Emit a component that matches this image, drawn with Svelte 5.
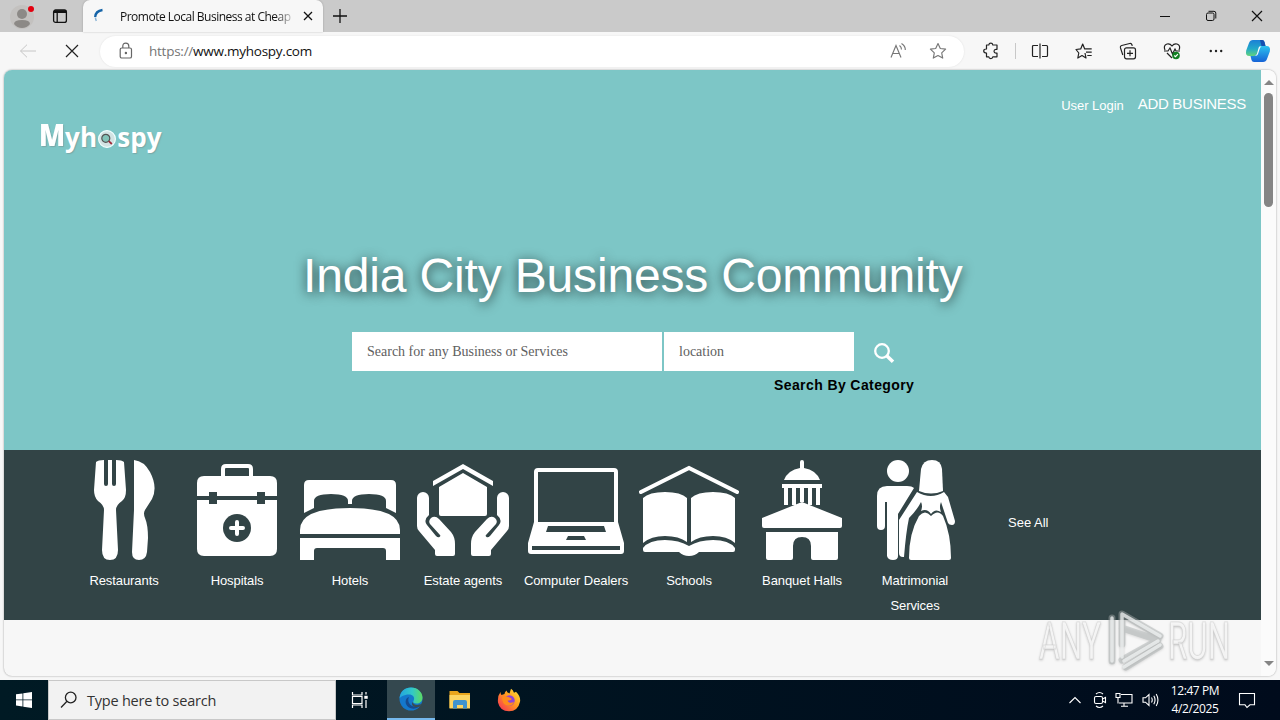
<script lang="ts">
  type Category = { icon: string; label: string }

  const categories: Category[] = [
    { icon: 'restaurant', label: 'Restaurants' },
    { icon: 'hospital', label: 'Hospitals' },
    { icon: 'hotel', label: 'Hotels' },
    { icon: 'estate', label: 'Estate agents' },
    { icon: 'computer', label: 'Computer Dealers' },
    { icon: 'school', label: 'Schools' },
    { icon: 'hall', label: 'Banquet Halls' },
    { icon: 'wedding', label: 'Matrimonial Services' },
  ]

  let query = $state('')
  let place = $state('')
</script>

<div class="screen">
  <div class="tabstrip">
    <svg class="avatar" width="26" height="28" viewBox="0 0 26 28">
      <circle cx="13" cy="15" r="12" fill="#c3c1bf" />
      <circle cx="13" cy="12" r="5" fill="#8c8986" />
      <path d="M5 22q0-4 8-4t8 4q-3 4-8 4t-8-4z" fill="#8c8986" />
      <circle cx="22" cy="7" r="3" fill="#e3000f" />
    </svg>
    <svg class="workspaces" width="16" height="16" viewBox="0 0 16 16" fill="none" stroke="#111" stroke-width="1.3">
      <rect x="1.6" y="2" width="12.8" height="12.4" rx="2" />
      <path d="M2 3.6h12" stroke-width="2.8" />
      <path d="M5.2 4v10" />
    </svg>
    <div class="tab">
      <svg class="spinner" width="14" height="16" viewBox="0 0 14 16" fill="none" stroke="#1564a8" stroke-width="2.3">
        <path d="M10.5 2Q3.500 3 3.200 9" />
        <path d="M3.400 9.500q.2 2 1 3.400" stroke="#8bb4d6" stroke-width="1.500" />
      </svg>
      <span class="tab-title">Promote Local Business at Cheap</span>
      <svg class="tab-close" width="10" height="10" viewBox="0 0 10 10" stroke="#111" stroke-width="1.3"><path d="M1 1l8 8M9 1L1 9" /></svg>
    </div>
    <svg class="new-tab" width="14" height="14" viewBox="0 0 14 14" stroke="#111" stroke-width="1.3"><path d="M7 0v14M0 7h14" /></svg>
    <div class="window-buttons">
      <svg width="12" height="12" viewBox="0 0 12 12" stroke="#111" fill="none"><path d="M1 6.500h10" /></svg>
      <svg width="12" height="12" viewBox="0 0 12 12" stroke="#111" fill="none"><rect x="1.500" y="3" width="7.500" height="7.500" rx="1.500" /><path d="M3.500 1.300H9q1.800 0 1.800 1.800v5.400" /></svg>
      <svg width="12" height="12" viewBox="0 0 12 12" stroke="#111" fill="none"><path d="M1 1l10 10M11 1L1 11" stroke-width="1.200" /></svg>
    </div>
  </div>

  <div class="toolbar">
    <svg class="back" width="18" height="14" viewBox="0 0 18 14" stroke="#c6c6c6" fill="none"><path d="M17 7H1.500M8 .7L1.500 7 8 13.300" /></svg>
    <svg class="stop" width="14" height="14" viewBox="0 0 14 14" stroke="#222" stroke-width="1.200"><path d="M1 1l12 12M13 1L1 13" /></svg>
    <div class="address">
      <svg width="14" height="18" viewBox="0 0 14 18" stroke="#666" stroke-width="1.200" fill="none">
        <rect x="1.200" y="6" width="11.300" height="10" rx="1.600" /><path d="M3.800 6V4.200q0-3 3-3t3 3V6" /><circle cx="6.900" cy="11" r=".6" fill="#666" />
      </svg>
      <span class="url"><i>https://</i>www.myhospy.com</span>
      <svg class="read" width="18" height="18" viewBox="0 0 18 18" stroke="#777" stroke-width="1.150" fill="none">
        <path d="M1 15.500L6 3.500l5 12M2.800 11.500h6.400" /><path d="M9.500 3.500q2 1.500 2 4M11.500 1.500q4 2.500 3.800 6.500" />
      </svg>
      <svg width="18" height="18" viewBox="0 0 18 18" stroke="#777" stroke-width="1.150" fill="none">
        <path d="M9 1.500l2.300 5 5.300.6-3.900 3.700 1 5.300L9 13.500l-4.700 2.600 1-5.300-3.900-3.700 5.300-.6z" stroke-linejoin="round" />
      </svg>
    </div>
    <div class="actions">
      <svg width="18" height="18" viewBox="0 0 18 18">
        <path d="M4.500 3h2.300q.2-1.800 2-1.800t2 1.800H15v4.300h-1q-2 .1-2 1.900t2 1.900h1v3.700h-4.200q-.2 1.800-2 1.800t-2-1.800H4.500v-3.800q-2.800 0-2.800-2t2.800-2z" stroke-linejoin="round" />
      </svg>
      <span class="divider"></span>
      <svg width="18" height="18" viewBox="0 0 18 18"><path d="M7 3.500H2.500q-1 0-1 1v9q0 1 1 1H7M11 3.500h4.500q1 0 1 1v9q0 1-1 1H11M9 1.500v15" /></svg>
      <svg width="18" height="18" viewBox="0 0 18 18">
        <path d="M10 11l1 5-4-2.500-4.200 2.500 1-5L1 7.500l4.700-.6L7.700 2l2 4.900h7M11 10.200h5.700M12.300 13.500h4.400" stroke-linejoin="round" />
      </svg>
      <svg width="18" height="18" viewBox="0 0 18 18">
        <rect x="5.500" y="5.800" width="11" height="11" rx="2" /><path d="M11 8.300v6M8 11.300h6M3.800 13L1.400 5.700q-.4-1.700 1.300-2.200l8-2q1.700-.4 2.200 1.200l.4 1.200" />
      </svg>
      <svg width="18" height="18" viewBox="0 0 18 18">
        <path d="M2 8Q0 3.500 4 2q3-.7 5 2 2-2.700 5-2 4 1.500 2 6M4 11l5 5M1 9h4l2-3 2.500 6L12 7l1 2h4" />
        <circle cx="13" cy="13.500" r="3.800" fill="#128022" stroke="none" /><path d="M11.200 13.500l1.300 1.200 2.400-2.500" stroke="#fff" />
      </svg>
      <svg width="18" height="18" viewBox="0 0 18 18"><g fill="#222" stroke="none"><circle cx="3.800" cy="9" r="1.200" /><circle cx="9" cy="9" r="1.200" /><circle cx="14.200" cy="9" r="1.200" /></g></svg>
      <svg class="copilot" width="26" height="26" viewBox="0 0 26 26">
        <defs>
          <linearGradient id="cp1" x1="0" y1="0" x2="0" y2="1"><stop offset="0" stop-color="#1b7fd6" /><stop offset=".55" stop-color="#22a9c9" /><stop offset="1" stop-color="#63d37c" /></linearGradient>
          <linearGradient id="cp2" x1="0" y1="0" x2="0" y2="1"><stop offset="0" stop-color="#2cc2ef" /><stop offset="1" stop-color="#1663d6" /></linearGradient>
        </defs>
        <path d="M8 2h9q2 0 2.500 2l1 4h-3q-3 0-4 4l-1.500 4q-.7 2-2.500 2H4.500Q0 18 1.200 12.500L4 5q1-3 4-3z" fill="url(#cp1)" stroke="none" />
        <path d="M18 24H9q-2 0-2.500-2l-1-4h3q3 0 4-4L14 10q.7-2 2.500-2h5Q26 8 24.800 13.500L22 21q-1 3-4 3z" fill="url(#cp2)" stroke="none" />
        <path d="M15 2h2q2 0 2.500 2l1 4h-4z" fill="#164fb0" stroke="none" />
        <path d="M14.500 8.500h2q-1.200.5-1.700 2L13 16q-.6 1.700-2 1.700h-1q1.400-.4 2-2l1.500-5.500q.4-1.300 1-1.700z" fill="#fff" stroke="none" />
      </svg>
    </div>
  </div>

  <div class="viewport">
    <main class="page">
      <section class="hero">
        <nav>
          <span class="login">User Login</span>
          <span class="add">ADD BUSINESS</span>
        </nav>
        <div class="logo">
          <b>M</b><span class="yh">yh</span>
          <svg width="20" height="20" viewBox="0 0 20 20">
            <circle cx="10" cy="10" r="8.400" fill="#d2e3e3" stroke="#f0ffff" stroke-width="1.200" />
            <circle cx="8.800" cy="9.300" r="4" fill="#82c3b8" stroke="#555" stroke-width="1.200" />
            <path d="M11.800 12.200l3 2.800" stroke="#a02b3b" stroke-width="1.800" />
          </svg>
          <span class="spy">spy</span>
        </div>
        <h1>India City Business Community</h1>
        <form>
          <input class="query" placeholder="Search for any Business or Services" bind:value={query} />
          <input class="place" placeholder="location" bind:value={place} />
          <svg width="24" height="24" viewBox="0 0 24 24" fill="none" stroke="#fff">
            <circle cx="10" cy="10" r="6.800" stroke-width="2.300" />
            <path d="M15 15l6 5.800" stroke-width="3.500" />
          </svg>
        </form>
        <p class="by-category">Search By Category</p>
      </section>

      <section class="categories">
        {#each categories as category}
          <div class="category">
            <svg width="100" height="100" viewBox="0 0 100 100" fill="#fff">
              {#if category.icon === 'restaurant'}
                <path d="M22 2Q24 0 30 0V24q0 2 2 2t2-2V0h4v24q0 2 2 2t2-2V0q6 0 8 2l2 28q0 8-4 11-6 4-6 9l2 40q0 10-8 10t-8-10l2-40q0-5-6-9-4-4-4-11z" />
                <path d="M60 0Q70 1 76 12q8 15 2 27l-7 11q-2 3 0 8 3 7 3 20l-1 14q-1 8-8 8t-7-8l2-42z" />
              {:else if category.icon === 'hospital'}
                <path d="M36 17V9q0-3 3-3h22q3 0 3 3v8" fill="none" stroke="#fff" stroke-width="4" />
                <path d="M10 36V23q0-7 7-7h66q7 0 7 7v13H78v-4h-8v4H30v-4h-8v4zM10 40h12v4h8v-4h40v4h8v-4h12v49q0 7-7 7H17q-7 0-7-7z" />
                <circle cx="50" cy="68" r="14" fill="#324446" />
                <path d="M50 62v12M44 68h12" stroke="#fff" stroke-width="4" stroke-linecap="round" />
              {:else if category.icon === 'hotel'}
                <path d="M4 53V25q0-5 5-5h82q5 0 5 5v28l-10-5v-7q0-7-17-7t-17 7v3h-4v-3q0-7-17-7t-17 7v7z" />
                <path d="M0 74v-4Q0 48 50 48t50 22v4zM0 78h100v22H86v-9q0-3-3-3H17q-3 0-3 3v9H0z" />
              {:else if category.icon === 'estate'}
                <path d="M20 21L50 4l30 17v5L50 9 20 26zM26 27l24-14 24 14v27q0 2-2 2H28q-2 0-2-2z" />
                {#each ['', 'translate(100 0) scale(-1 1)'] as flip}
                  <path transform={flip} d="M4 38a6 6 0 0 1 12 0v17q-6 5-2 10l9 11q2 2 3.500 1t.5-2L17 64q-2-3 1-6 4-3 8 1l12 13q4 5 4 12v10q0 2-2 2H24q-2 0-2-2v-4L6 71q-2-2-2-5z" />
                {/each}
              {:else if category.icon === 'computer'}
                <path fill-rule="evenodd" d="M8 62V12q0-4 4-4h76q4 0 4 4v50l6 21v8q0 3-3 3H5q-3 0-3-3v-8zM12 12v50h76V12zM22 66l-2 6h60l-2-6zM42 76l-2 4h20l-2-4zM6 86v4h88v-4z" />
              {:else if category.icon === 'school'}
                <path d="M2 32L50 8l48 24" fill="none" stroke="#fff" stroke-width="4" stroke-linecap="round" />
                <path d="M4 38q6-6 22-6t22 6v44q-8-6-22-6T4 83zM96 38q-6-6-22-6t-22 6v44q8-6 22-6t22 7z" />
                <path d="M4 88q6-8 22-8 14 0 24 6 10-6 24-6 16 0 22 8v2q0 2-2 2H60q-4 4-10 4t-10-4H6q-2 0-2-2z" />
              {:else if category.icon === 'hall'}
                <path d="M48 8V2q0-2 2-2t2 2v6q12 2 16 12H32Q36 10 48 8zM30 24h40v4h-2v17h-4V28h-4v17h-4V28h-4v14h-4V28h-4v17h-4V28h-4v17h-4V28h-2z" />
                <path d="M10 58L50 42l40 16v8q0 2-2 2H12q-2 0-2-2z" />
                <path d="M14 72h72v26q0 2-2 2H61q-2 0-2-2V86q0-9-9-9t-9 9v12q0 2-2 2H16q-2 0-2-2z" />
              {:else}
                <circle cx="33" cy="11" r="11" />
                <path d="M12 36q0-10 10-10h20q5 0 7 2L33 54v42q0 4-5 4t-6-4V42h-2v24q0 4-4 4t-4-4z" />
                <path d="M54 31l2-22q2-9 11-9t10 9l1 22q-12 5-24 0z" />
                <path d="M52 32q14 8 27 0l4 5 7 24q0 4-3 4t-4-2L76 42q-2 5 0 10-6-4-10 2-4-6-10-3 2-5 0-9-4 8-12 16-3 14-5 39h-1q-4 0-4-4V60z" />
                <path d="M54 56q6-7 12 0 7-7 12 0 8 18 8 42 0 2-2 2H46q-2 0-2-2 0-25 10-42z" />
              {/if}
            </svg>
            <span>{category.label}</span>
          </div>
        {/each}
        <span class="see-all">See All</span>
      </section>
    </main>
    <div class="scrollbar">
      <i class="arrow up"></i>
      <i class="thumb"></i>
      <i class="arrow down"></i>
    </div>
  </div>

  <svg class="watermark" width="204" height="72" viewBox="0 0 204 72">
    <g font-family="Roboto, sans-serif" font-size="52" fill="#fff" fill-opacity=".75" stroke="#bbb" stroke-opacity=".4">
      <text x="3" y="55" textLength="62" lengthAdjust="spacingAndGlyphs">ANY</text>
      <text x="132" y="55" textLength="62" lengthAdjust="spacingAndGlyphs">RUN</text>
    </g>
    <g fill="none" stroke-linejoin="round" stroke-linecap="round">
      <path d="M76 57V14M86 40V10l38 22M86 24l36 12-36 20M90 63l34-21" stroke="#a9b0b0" stroke-opacity=".45" stroke-width="7" />
      <path d="M76 57V14M86 53V10l38 22M88 57l34-20M88 63l36-22" stroke="#f2f4f4" stroke-opacity=".75" stroke-width="3.500" />
    </g>
  </svg>

  <footer class="taskbar">
    <div class="start">
      <svg width="16" height="16" viewBox="0 0 16 16" fill="#fff"><path d="M0 2.300l6.500-.9v6.100H0zM7.300 1.300L16 0v7.500H7.300zM0 8.300h6.500v6.200L0 13.600zM7.300 8.300H16V16l-8.700-1.300z" /></svg>
    </div>
    <div class="search">
      <svg width="18" height="18" viewBox="0 0 18 18" fill="none" stroke="#222" stroke-width="1.300"><circle cx="10.700" cy="6.500" r="5.300" /><path d="M7 10.300L1 16.500" /></svg>
      <span>Type here to search</span>
    </div>
    <div class="app">
      <svg width="18" height="18" viewBox="0 0 18 18" fill="none" stroke="#fff" stroke-width="1.200"><path d="M1.500 1v3h9.500V1M1.500 17v-3h9.500v3M1.500 5.500h9.500v7H1.500zM15 1v2.500M15 9v8" /><path d="M13.300 6.300h3.400" stroke-width="3" /></svg>
    </div>
    <div class="app active">
      <svg width="24" height="24" viewBox="0 0 24 24">
        <defs>
          <linearGradient id="edgeTop" x1="0" y1="0" x2="1" y2="0"><stop offset="0" stop-color="#23a5df" /><stop offset=".55" stop-color="#32c8c8" /><stop offset="1" stop-color="#5ddb62" /></linearGradient>
        </defs>
        <circle cx="12" cy="12" r="11.500" fill="#1478cc" />
        <path d="M.5 12C1 4 6 .5 12 .5c7 0 11.500 5 11.500 10 0 4-3 6-6 6-2.500 0-4-1-3-2.500 2-4-1-6.500-4.500-6.500C5 7.500.5 10 .5 12z" fill="url(#edgeTop)" />
        <path d="M10 10c-3 1-4 4-3 7 2 5 9 6.500 14 2-2 1-9 1.500-11-3-1-2-1-4 0-6z" fill="#164b8f" />
        <path d="M13.500 15c1 3 5 4 9.500 1.500l-1.500 2.700c-5 2.300-10 0-8-4.200z" fill="#3a4d50" />
      </svg>
    </div>
    <div class="app">
      <svg width="22" height="20" viewBox="0 0 22 20"><path d="M.5 1h8l2 2H21v15H.5z" fill="#e9a51d" /><path d="M.5 5H21v13.500H.5z" fill="#fcd462" /><path d="M4 18.500V12q0-2 2-2h10q2 0 2 2v6.500h-4V15H8v3.500z" fill="#3f93ce" /></svg>
    </div>
    <div class="app">
      <svg width="24" height="24" viewBox="0 0 24 24">
        <defs><linearGradient id="fox" x1="1" y1="0" x2="0" y2="1"><stop offset="0" stop-color="#ffe93e" /><stop offset=".45" stop-color="#ff9a1f" /><stop offset="1" stop-color="#f5255c" /></linearGradient></defs>
        <path d="M3.500 4q0 2 1 3l3-1q0-2 2-3.500 0 2 3 3L14 .8q2 1 3 4l2-1q5 5 4 10-2 9.500-11 9.500T1 14.500Q.3 8 3.500 4z" fill="url(#fox)" />
        <circle cx="12.500" cy="12.500" r="5.200" fill="#8d43d8" />
        <path d="M5 9q4-2 8 .8l2 1.200q-2 2-4.500 1.500Q12 16 17 14q-2 5-7 3.500T5 9z" fill="#ff8b1c" />
      </svg>
    </div>
    <div class="tray">
      <svg width="14" height="16" viewBox="0 0 14 16"><path d="M1.500 11L7 5.500l5.500 5.500" /></svg>
      <svg width="14" height="18" viewBox="0 0 14 18"><rect x="1.500" y="5.500" width="8" height="7" rx="1.500" /><path d="M9.500 8l3-1.500v5l-3-1.500M3 3q3.500-3 7 0M3 15q3.500 3 7 0" /></svg>
      <svg width="18" height="16" viewBox="0 0 18 16"><path d="M6 2.500h11v8.500H4M9 11v3M6 14.300h7M1 1.500h4v4H1zM3 5.500v6" /></svg>
      <svg width="18" height="16" viewBox="0 0 18 16"><path d="M1 5.800h2.500L7 2.500v11L3.500 10.200H1zM9.500 5.500q1.500 2.500 0 5M11.800 3.800q2.500 4.200 0 8.400M14.200 2q3.500 6 0 12" /></svg>
      <div class="clock"><span>12:47 PM</span><span>4/2/2025</span></div>
      <svg class="note" width="18" height="18" viewBox="0 0 18 18"><path d="M1.500 2.500h15v11.300H12L9 16.500l-2-2.700H1.500z" /></svg>
    </div>
  </footer>
</div>

<style>
  :global(body) {
    margin: 0;
    overflow: hidden;
  }

  .screen {
    position: relative;
    width: 1280px;
    height: 720px;
    display: flex;
    flex-direction: column;
    background: #f7f7f7;
    font-family: 'Open Sans', 'Noto Sans', sans-serif;
    overflow: hidden;
  }

  svg {
    display: block;
    flex: none;
  }

  .tabstrip {
    height: 32px;
    flex: none;
    display: flex;
    align-items: center;
    background: #cacaca;
  }

  .avatar {
    margin-left: 9px;
  }

  .workspaces {
    margin-left: 17px;
  }

  .tab {
    width: 240px;
    height: 32px;
    margin-left: 15px;
    display: flex;
    align-items: center;
    box-sizing: border-box;
    padding-left: 9px;
    background: #f7f7f7;
    border-radius: 7px 7px 0 0;
    box-shadow: 0 0 2px rgba(0, 0, 0, 0.25);
  }

  .tab-title {
    width: 173px;
    margin-left: 14px;
    font-size: 12px;
    letter-spacing: -0.5px;
    white-space: nowrap;
    color: #111;
    mask-image: linear-gradient(to right, #000 155px, transparent 176px);
  }

  .tab-close {
    margin-left: 10px;
  }

  .new-tab {
    margin-left: 10px;
  }

  .window-buttons {
    display: flex;
    gap: 34px;
    margin: 0 17px 0 auto;
  }

  .toolbar {
    height: 38px;
    flex: none;
    display: flex;
    align-items: center;
  }

  .back {
    margin-left: 19px;
  }

  .stop {
    margin-left: 28px;
  }

  .address {
    width: 864px;
    height: 31px;
    flex: none;
    margin-left: 21px;
    box-sizing: border-box;
    padding: 0 17px 0 19px;
    display: flex;
    align-items: center;
    border-radius: 16px;
    background: #fff;
    box-shadow: 0 0 2px rgba(0, 0, 0, 0.1);
  }

  .url {
    margin-left: 16px;
    font-size: 13.5px;
    letter-spacing: -0.25px;
    color: #111;
  }

  .url i {
    font-style: normal;
    color: #757575;
  }

  .read {
    margin: 0 21px 0 auto;
  }

  .actions {
    display: flex;
    align-items: center;
    gap: 26px;
    padding-left: 18px;
  }

  .actions svg {
    fill: none;
    stroke: #222;
    stroke-width: 1.2;
  }

  .actions .copilot {
    margin-left: -6px;
  }

  .divider {
    width: 1px;
    height: 16px;
    margin: 0 -11px;
    background: #c8c8c8;
  }

  .viewport {
    width: 1272px;
    height: 606px;
    flex: none;
    margin-left: 4px;
    display: flex;
    border-radius: 8px;
    overflow: hidden;
    background: #f7f7f7;
    box-shadow: 0 0 2px rgba(0, 0, 0, 0.4);
  }

  .page {
    width: 1257px;
    font-family: 'Liberation Sans', Arial, sans-serif;
    color: #fff;
  }

  .hero {
    height: 380px;
    box-sizing: border-box;
    padding-top: 25px;
    background: #7dc6c6;
  }

  nav {
    height: 20px;
    display: flex;
    justify-content: flex-end;
    align-items: center;
    gap: 14px;
    padding-right: 15px;
  }

  .login {
    font-size: 13px;
    letter-spacing: -0.05px;
  }

  .add {
    font-size: 15px;
    line-height: 16px;
    margin-top: -2px;
    letter-spacing: -0.28px;
  }

  .logo {
    height: 40px;
    padding: 2px 0 0 35px;
    display: flex;
    align-items: center;
    font-family: 'Open Sans', sans-serif;
    font-weight: 700;
    font-size: 26px;
    letter-spacing: 0.1px;
    text-shadow: 1px 1px 1px rgba(120, 140, 140, 0.5);
  }

  .logo b {
    font-size: 30px;
    line-height: 34px;
    margin-top: -4px;
    transform: scaleX(0.9);
    transform-origin: left;
    margin-right: -3px;
  }

  .logo svg {
    margin: 3px 0 0;
  }

  h1 {
    margin: 91px 0 0 299px;
    font-size: 48px;
    line-height: 56px;
    font-weight: 400;
    letter-spacing: -0.16px;
    white-space: nowrap;
    text-shadow: 0 2px 12px rgba(0, 0, 0, 0.75);
  }

  form {
    margin: 28px 0 0 348px;
    display: flex;
    gap: 2px;
    align-items: center;
  }

  input {
    height: 39px;
    box-sizing: border-box;
    border: 0;
    border-radius: 0;
    padding: 0 15px;
    font-family: 'Liberation Serif', serif;
    font-size: 14px;
    background: #fff;
    outline: none;
  }

  input::placeholder {
    color: #606060;
    opacity: 1;
  }

  .query {
    width: 310px;
  }

  .place {
    width: 190px;
  }

  form svg {
    margin: 3px 0 0 16px;
  }

  .by-category {
    margin: 5px 0 0 770px;
    font-size: 14px;
    line-height: 18px;
    font-weight: 700;
    letter-spacing: 0.4px;
    color: #000;
  }

  .categories {
    height: 170px;
    box-sizing: border-box;
    padding: 10px 0 0 63px;
    display: flex;
    background: #324446;
    font-size: 13px;
  }

  .category {
    width: 113px;
    display: flex;
    flex-direction: column;
    align-items: center;
  }

  .category span {
    margin: 8px 0 0 1px;
    line-height: 25px;
    letter-spacing: -0.08px;
    text-align: center;
  }

  .category:nth-child(8) span {
    width: 80px;
  }

  .see-all {
    margin: 50px 0 0 37px;
    line-height: 25px;
  }

  .scrollbar {
    flex: 1;
    display: flex;
    flex-direction: column;
    align-items: center;
    background: #fbfbfb;
  }

  .arrow {
    border: 5px solid transparent;
  }

  .up {
    border-top: 0;
    border-bottom-color: #858585;
    margin-top: 10px;
  }

  .thumb {
    width: 9px;
    height: 114px;
    margin-top: 8px;
    border-radius: 5px;
    background: #858585;
  }

  .down {
    border-bottom: 0;
    border-top-color: #858585;
    margin: auto 0 10px;
  }

  .watermark {
    position: absolute;
    left: 1036px;
    top: 604px;
    filter: drop-shadow(0 1px 1px rgba(0, 0, 0, 0.25));
  }

  .taskbar {
    height: 40px;
    margin-top: 4px;
    flex: none;
    display: flex;
    background: linear-gradient(to right, #001a24, #000b1c);
    color: #fff;
  }

  .start,
  .app {
    width: 48px;
    display: flex;
    align-items: center;
    justify-content: center;
  }

  .app:nth-child(3) {
    margin-right: 3px;
  }

  .app + .app {
    margin-right: 1px;
  }

  .app.active {
    box-sizing: border-box;
    background: #34484f;
    border-bottom: 2px solid #76b9ed;
  }

  .search {
    width: 288px;
    box-sizing: border-box;
    display: flex;
    align-items: center;
    padding-left: 11px;
    background: #f2f2f2;
    border: 1px solid #c8c8c8;
    color: #333;
    font-size: 14.5px;
    letter-spacing: -0.23px;
  }

  .search span {
    margin-left: 9px;
  }

  .tray {
    margin-left: auto;
    padding-right: 24px;
    display: flex;
    align-items: center;
    gap: 9px;
  }

  .tray svg {
    fill: none;
    stroke: #fff;
    stroke-width: 1.1;
  }

  .tray svg:nth-child(2) {
    margin: 0 -1px 0 2px;
  }

  .clock {
    width: 50px;
    margin-left: 1px;
    display: flex;
    flex-direction: column;
    align-items: center;
    font-size: 12px;
    line-height: 18px;
    letter-spacing: -0.4px;
    white-space: nowrap;
  }

  .note {
    margin-left: 9px;
  }
</style>
